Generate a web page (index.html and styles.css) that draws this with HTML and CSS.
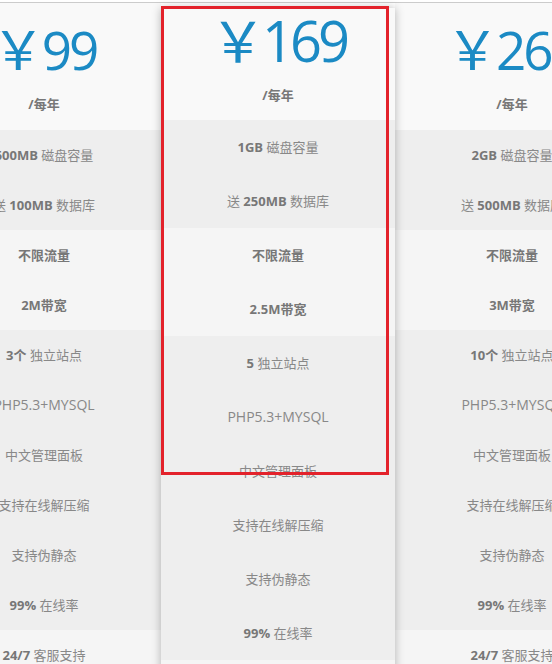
FILE: index.html
```html
<!doctype html>
<html lang="zh-CN">
<head>
    <meta charset="utf-8">
    <title>虚拟主机价格</title>
    <link rel="stylesheet" href="styles.css">
</head>
<body>
<div class="plans">
    <div class="plan">
        <div class="plan-head">
            <div class="price">￥99</div>
            <div class="unit">/每年</div>
        </div>
        <ul class="features">
            <li><b>500MB</b> 磁盘容量</li>
            <li>送 <b>100MB</b> 数据库</li>
            <li class="light"><b>不限流量</b></li>
            <li class="light"><b>2M带宽</b></li>
            <li><b>3个</b> 独立站点</li>
            <li class="php">PHP5.3+MYSQL</li>
            <li>中文管理面板</li>
            <li>支持在线解压缩</li>
            <li>支持伪静态</li>
            <li><b>99%</b> 在线率</li>
            <li class="light"><b>24/7</b> 客服支持</li>
        </ul>
    </div>
    <div class="plan featured">
        <div class="plan-head">
            <div class="price">￥169</div>
            <div class="unit">/每年</div>
        </div>
        <ul class="features">
            <li><b>1GB</b> 磁盘容量</li>
            <li>送 <b>250MB</b> 数据库</li>
            <li class="light"><b>不限流量</b></li>
            <li class="light"><b>2.5M带宽</b></li>
            <li><b>5</b> 独立站点</li>
            <li class="php">PHP5.3+MYSQL</li>
            <li>中文管理面板</li>
            <li>支持在线解压缩</li>
            <li>支持伪静态</li>
            <li><b>99%</b> 在线率</li>
            <li class="light"><b>24/7</b> 客服支持</li>
        </ul>
    </div>
    <div class="plan">
        <div class="plan-head">
            <div class="price">￥269</div>
            <div class="unit">/每年</div>
        </div>
        <ul class="features">
            <li><b>2GB</b> 磁盘容量</li>
            <li>送 <b>500MB</b> 数据库</li>
            <li class="light"><b>不限流量</b></li>
            <li class="light"><b>3M带宽</b></li>
            <li><b>10个</b> 独立站点</li>
            <li class="php">PHP5.3+MYSQL</li>
            <li>中文管理面板</li>
            <li>支持在线解压缩</li>
            <li>支持伪静态</li>
            <li><b>99%</b> 在线率</li>
            <li class="light"><b>24/7</b> 客服支持</li>
        </ul>
    </div>
</div>
<div class="highlight"></div>
</body>
</html>
```
FILE: styles.css
```css
body {
	margin: 0;
	background: #fff;
	font-family: "Open Sans", "Noto Sans CJK SC", sans-serif;
	font-size: 13px;
	color: #888;
	overflow: hidden;
}
.plans {
	display: flex;
	align-items: flex-start;
	margin-top: 2px;
	margin-left: -73px;
	border-top: 1px solid #ccc;
}
.plan {
	width: 234px;
	flex-shrink: 0;
	background: #f9f9f9;
}
.plan-head {
	height: 127px;
	box-sizing: border-box;
	padding-top: 20px;
	text-align: center;
}
.price {
	font-size: 53px;
	line-height: 53px;
	letter-spacing: -3px;
	color: #1b8ac4;
}
.unit {
	margin-top: 18px;
	line-height: 20px;
	font-weight: bold;
	color: #777;
}
.features {
	list-style: none;
	margin: 0;
	padding: 0;
}
.features li {
	height: 50px;
	line-height: 50px;
	text-align: center;
	white-space: nowrap;
	background: #eeeeee;
}
.features li.light {
	background: #f5f5f5;
}
.features li.php {
	font-size: 14px;
}
.features b {
	color: #777;
}
.plan.featured {
	position: relative;
	z-index: 1;
	margin-top: 5px;
	box-shadow: 0 0 9px rgba(0, 0, 0, 0.28);
}
.featured .plan-head {
	height: 112px;
	padding-top: 4px;
}
.featured .price {
	font-size: 56px;
	line-height: 56px;
	letter-spacing: -4px;
}
.featured .unit {
	margin-top: 17px;
}
.featured .features li {
	height: 54px;
	line-height: 54px;
}
.highlight {
	position: absolute;
	left: 161px;
	top: 6px;
	width: 228px;
	height: 469px;
	box-sizing: border-box;
	border: 3px solid #e3222b;
	z-index: 2;
}
```
